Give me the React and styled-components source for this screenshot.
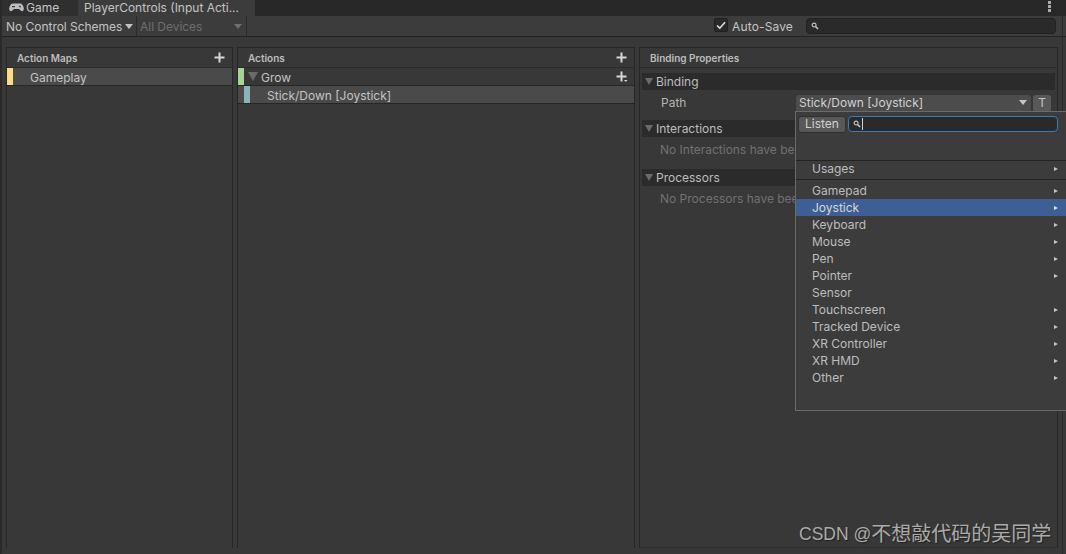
import React from "react";
import styled, { createGlobalStyle } from "styled-components";

const Global = createGlobalStyle`
  html, body { margin: 0; padding: 0; background: #383838; }
  body { font-family: Inter, "Noto Sans", sans-serif; font-size: 12px; color: #c4c4c4; }
  * { box-sizing: border-box; }
`;

const Page = styled.div`
  position: relative;
  width: 1066px;
  height: 554px;
  overflow: hidden;
  background: #383838;
  display: flex;
  flex-direction: column;
  border-left: 2px solid #2a2a2a;
  &::after {
    content: "";
    position: absolute;
    left: 1060px;
    top: 0;
    bottom: 0;
    width: 1px;
    background: #2a2a2a;
  }
`;

const TabBar = styled.div`
  display: flex;
  align-items: stretch;
  height: 16px;
  background: #282828;
`;

const Tab = styled.div`
  display: flex;
  align-items: center;
  gap: 2px;
  width: ${(p) => p.$w}px;
  padding-left: ${(p) => p.$pl}px;
  padding-bottom: 2px;
  background: ${(p) => (p.$active ? "#3c3c3c" : "#2f2f2f")};
  font-size: 12px;
  color: #c4c4c4;
  white-space: nowrap;
`;

const TabSpacer = styled.div`
  flex: 1;
`;

const Kebab = styled.div`
  display: flex;
  flex-direction: column;
  justify-content: flex-start;
  gap: 1px;
  width: 18px;
  padding-top: 1px;
  & i { display: block; width: 3px; height: 3px; background: #ababab; }
`;

const Toolbar = styled.div`
  display: flex;
  align-items: stretch;
  height: 21px;
  background: #3c3c3c;
  border-bottom: 1px solid #232323;
`;

const Drop = styled.div`
  display: flex;
  align-items: center;
  justify-content: space-between;
  width: ${(p) => p.$w}px;
  padding: 0 ${(p) => p.$pr}px 0 ${(p) => p.$pl}px;
  border-right: 1px solid #2a2a2a;
  color: ${(p) => (p.$off ? "#6e6e6e" : "#c4c4c4")};
  font-size: 12px;
  letter-spacing: -0.03px;
  white-space: nowrap;
`;

const Caret = styled.span`
  display: block;
  width: 0;
  height: 0;
  border-left: 4px solid transparent;
  border-right: 4px solid transparent;
  border-top: 5px solid ${(p) => p.$c || "#c4c4c4"};
`;

const ToolRight = styled.div`
  margin-left: auto;
  display: flex;
  align-items: center;
  padding-right: 10px;
`;

const Check = styled.div`
  width: 14px;
  height: 14px;
  border-radius: 2px;
  background: #2a2a2a;
  border: 1px solid #202020;
  display: flex;
  align-items: center;
  justify-content: center;
  margin-right: 4px;
  margin-top: -2px;
`;

const AutoSave = styled.span`
  font-size: 12px;
  letter-spacing: 0.15px;
  color: #c4c4c4;
  margin-right: 13px;
  width: 61px;
  white-space: nowrap;
`;

const SearchField = styled.div`
  display: flex;
  align-items: center;
  width: ${(p) => p.$w}px;
  height: ${(p) => p.$h}px;
  border-radius: 4px;
  background: #2a2a2a;
  border: 1px solid ${(p) => (p.$focus ? "#3a79bb" : "#212121")};
  padding-left: 4px;
`;

const TextCursor = styled.span`
  width: 1px;
  height: 12px;
  margin-left: 1px;
  background: #d0d0d0;
`;

const Columns = styled.div`
  flex: 1;
  display: flex;
  gap: 4px;
  padding: 10px 6px 6px 4px;
  min-height: 0;
`;

const Panel = styled.section`
  width: ${(p) => p.$w}px;
  display: flex;
  flex-direction: column;
  border: 1px solid #262626;
  border-bottom: ${(p) => (p.$closed ? "1px solid #2e2e2e" : "none")};
  background: #383838;
`;

const PanelHead = styled.header`
  display: flex;
  align-items: center;
  justify-content: space-between;
  height: 20px;
  padding: 0 6px 0 ${(p) => p.$pl || 10}px;
  font-size: 10px;
  font-weight: 600;
  color: #bdbdbd;
  border-bottom: 1px solid #2c2c2c;
`;

const Row = styled.div`
  display: flex;
  align-items: center;
  height: ${(p) => p.$h || 18}px;
  background: ${(p) => (p.$sel ? "#4a4a4a" : "#383838")};
  border-bottom: 1px solid #262626;
  color: #c4c4c4;
  font-size: 12px;
  padding-right: 6px;
`;

const ColorTag = styled.span`
  width: 6px;
  align-self: stretch;
  margin-left: ${(p) => p.$ml || 0}px;
  background: ${(p) => p.$c};
`;

const RowLabel = styled.span`
  margin-left: ${(p) => p.$ml}px;
  padding-top: 2px;
`;

const Tri = styled.span`
  display: block;
  width: 0;
  height: 0;
  margin-left: ${(p) => p.$ml}px;
  border-left: 5px solid transparent;
  border-right: 5px solid transparent;
  border-top: 9px solid #6a6a6a;
`;

const Grow = styled.span`
  flex: 1;
`;

const Section = styled.div`
  display: flex;
  align-items: center;
  height: 17px;
  margin: ${(p) => p.$mt || 0}px 2px 0 2px;
  background: #2b2b2b;
  color: #bdbdbd;
  font-size: 12px;
  gap: 3px;
  padding-left: 3px;
`;

const SmallTri = styled(Tri)`
  margin-left: 0;
  border-left-width: 4px;
  border-right-width: 4px;
  border-top-width: 7px;
`;

const PathRow = styled.div`
  display: flex;
  align-items: center;
  height: 18px;
  margin-top: 4px;
  padding-left: 21px;
  color: #b4b4b4;
  font-size: 12px;
`;

const PathLabel = styled.span`
  width: 135px;
  padding-bottom: 2px;
`;

const PathSelect = styled.div`
  display: flex;
  align-items: center;
  justify-content: space-between;
  width: 235px;
  height: 17px;
  padding: 0 4px 2px 3px;
  background: #4c4c4c;
  border-radius: 3px;
  color: #d0d0d0;
`;

const TButton = styled.div`
  width: 18px;
  height: 17px;
  margin-left: 2px;
  padding-bottom: 2px;
  background: #585858;
  border-radius: 3px;
  display: flex;
  align-items: center;
  justify-content: center;
  color: #c4c4c4;
`;

const Empty = styled.div`
  height: 20px;
  margin-top: 2px;
  padding-left: 20px;
  display: flex;
  align-items: center;
  color: #717171;
  font-size: 12px;
  white-space: nowrap;
`;

const Popup = styled.div`
  position: absolute;
  z-index: 2;
  left: 793px;
  top: 111px;
  width: 273px;
  height: 300px;
  background: #3c3c3c;
  border: 1px solid #6a6a6a;
  border-right: none;
  display: flex;
  flex-direction: column;
`;

const PopupTop = styled.div`
  display: flex;
  height: 49px;
  padding: 4px 0 0 2px;
  align-items: flex-start;
  gap: 2px;
  border-bottom: 1px solid #232323;
`;

const Listen = styled.div`
  width: 48px;
  height: 17px;
  padding-bottom: 2px;
  border-radius: 3px;
  background: #585858;
  border: 1px solid #303030;
  color: #d2d2d2;
  display: flex;
  align-items: center;
  justify-content: center;
  font-size: 12px;
`;

const PopItem = styled.div`
  display: flex;
  align-items: center;
  justify-content: space-between;
  height: 17px;
  padding: 0 10px 0 16px;
  background: ${(p) => (p.$sel ? "#3e5f96" : "transparent")};
  color: ${(p) => (p.$sel ? "#d8d8d8" : "#bdbdbd")};
  font-size: 12px;
  line-height: 14px;
`;

const Usage = styled(PopItem)`
  height: 19px;
  padding-bottom: 3px;
  border-bottom: 1px solid #232323;
  margin-bottom: 2px;
`;

const Arrow = styled.span`
  display: block;
  width: 0;
  height: 0;
  border-top: 2.5px solid transparent;
  border-bottom: 2.5px solid transparent;
  border-left: 4px solid ${(p) => (p.$sel ? "#e0e0e0" : "#c4c4c4")};
  opacity: ${(p) => (p.$none ? 0 : 1)};
`;

const Watermark = styled.div`
  position: absolute;
  z-index: 3;
  left: 797px;
  top: 522px;
  display: flex;
  align-items: center;
  gap: 0;
  font-family: "Liberation Sans", "Noto Sans CJK SC", sans-serif;
  font-size: 17.5px;
  line-height: 24px;
  color: #ababab;
  text-shadow: 1px 1px 1px #202020;
  white-space: pre;
`;

const Han = styled.span`
  font-size: 20px;
`;

const Plus = ({ small }) => (
  <svg width="12" height="11" viewBox="0 0 12 11" fill="#d6d6d6">
    <rect x="4.5" y="0.5" width="2" height="10" />
    <rect x="0.5" y="4.5" width="10" height="2" />
    {small && <path d="M8 9h3.500l-1.750 2z" />}
  </svg>
);

const Mag = () => (
  <svg width="8" height="8" viewBox="0 0 9 9" fill="none" stroke="#c8c8c8" strokeWidth="1.200">
    <circle cx="3.500" cy="3.500" r="2.200" />
    <path d="M5.200 5.200L8 8" strokeWidth="1.600" />
  </svg>
);

const Gamepad = () => (
  <svg width="15" height="9" viewBox="0 0 15 9">
    <path d="M4 0.500h7c2 0 3.500 2 3.800 5 .2 2-1.300 3.300-2.800 2.300L10 6H5L3 7.800C1.500 8.800 0 7.500.2 5.500.5 2.500 2 .5 4 .5z" fill="#bdbdbd" />
    <rect x="3" y="3" width="3" height="1.200" fill="#3a3a3a" />
    <circle cx="11" cy="3.500" r="0.900" fill="#3a3a3a" />
  </svg>
);

const Tick = () => (
  <svg width="10" height="9" viewBox="0 0 10 9" fill="none" stroke="#e0e0e0" strokeWidth="1.600">
    <path d="M1 4.500L3.800 7.200L9 1.200" />
  </svg>
);

const items = [
  ["Gamepad", 1],
  ["Joystick", 1, true],
  ["Keyboard", 1],
  ["Mouse", 1],
  ["Pen", 1],
  ["Pointer", 1],
  ["Sensor", 0],
  ["Touchscreen", 1],
  ["Tracked Device", 1],
  ["XR Controller", 1],
  ["XR HMD", 1],
  ["Other", 1],
];

export default function App() {
  return (
    <Page>
      <Global />
      <TabBar>
        <Tab $w={76} $pl={7}>
          <Gamepad />
          <span>Game</span>
        </Tab>
        <Tab $w={177} $pl={6} $active>
          PlayerControls (Input Acti...
        </Tab>
        <TabSpacer />
        <Kebab>
          <i />
          <i />
          <i />
        </Kebab>
      </TabBar>
      <Toolbar>
        <Drop $w={135} $pl={4} $pr={3}>
          No Control Schemes
          <Caret />
        </Drop>
        <Drop $w={110} $pl={3} $pr={4} $off>
          All Devices
          <Caret $c="#6e6e6e" />
        </Drop>
        <ToolRight>
          <Check>
            <Tick />
          </Check>
          <AutoSave>Auto-Save</AutoSave>
          <SearchField $w={250} $h={16}>
            <Mag />
          </SearchField>
        </ToolRight>
      </Toolbar>
      <Columns>
        <Panel $w={227}>
          <PanelHead>
            <span>Action Maps</span>
            <Plus />
          </PanelHead>
          <Row $sel $h={18}>
            <ColorTag $c="#fedc85" />
            <RowLabel $ml={17}>Gameplay</RowLabel>
          </Row>
        </Panel>
        <Panel $w={398}>
          <PanelHead>
            <span>Actions</span>
            <Plus />
          </PanelHead>
          <Row $h={18}>
            <ColorTag $c="#a8d594" />
            <Tri $ml={4} />
            <RowLabel $ml={3}>Grow</RowLabel>
            <Grow />
            <Plus small />
          </Row>
          <Row $sel $h={18}>
            <ColorTag $c="#8cb3b8" $ml={6} />
            <RowLabel $ml={17}>Stick/Down [Joystick]</RowLabel>
          </Row>
        </Panel>
        <Panel $w={419} $closed>
          <PanelHead>
            <span>Binding Properties</span>
          </PanelHead>
          <Section $mt={5}>
            <SmallTri />
            <span>Binding</span>
          </Section>
          <PathRow>
            <PathLabel>Path</PathLabel>
            <PathSelect>
              Stick/Down [Joystick]
              <Caret />
            </PathSelect>
            <TButton>T</TButton>
          </PathRow>
          <Section $mt={8}>
            <SmallTri />
            <span>Interactions</span>
          </Section>
          <Empty>No Interactions have been added.</Empty>
          <Section $mt={10}>
            <SmallTri />
            <span>Processors</span>
          </Section>
          <Empty>No Processors have been added.</Empty>
        </Panel>
      </Columns>
      <Popup>
        <PopupTop>
          <Listen>Listen</Listen>
          <SearchField $w={210} $h={16} $focus>
            <Mag />
            <TextCursor />
          </SearchField>
        </PopupTop>
        <Usage>
          <span>Usages</span>
          <Arrow />
        </Usage>
        {items.map(([label, hasArrow, sel]) => (
          <PopItem key={label} $sel={sel}>
            <span>{label}</span>
            <Arrow $none={!hasArrow} $sel={sel} />
          </PopItem>
        ))}
      </Popup>
      <Watermark>
        <span>CSDN @</span>
        <Han>不想敲代码的吴同学</Han>
      </Watermark>
    </Page>
  );
}
